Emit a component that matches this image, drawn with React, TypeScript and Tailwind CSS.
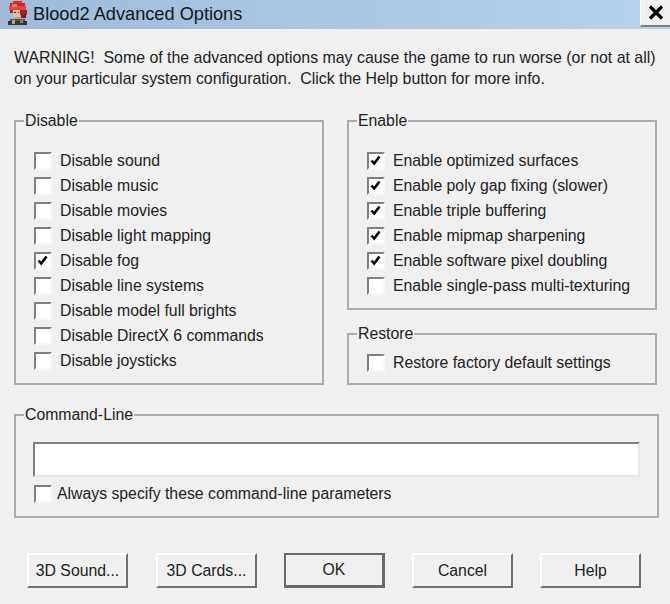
import React from 'react'

const font = "font-['Liberation_Sans',Arial,sans-serif]"

const disableOptions = [
  { label: 'Disable sound', checked: false },
  { label: 'Disable music', checked: false },
  { label: 'Disable movies', checked: false },
  { label: 'Disable light mapping', checked: false },
  { label: 'Disable fog', checked: true },
  { label: 'Disable line systems', checked: false },
  { label: 'Disable model full brights', checked: false },
  { label: 'Disable DirectX 6 commands', checked: false },
  { label: 'Disable joysticks', checked: false }
]

const enableOptions = [
  { label: 'Enable optimized surfaces', checked: true },
  { label: 'Enable poly gap fixing (slower)', checked: true },
  { label: 'Enable triple buffering', checked: true },
  { label: 'Enable mipmap sharpening', checked: true },
  { label: 'Enable software pixel doubling', checked: true },
  { label: 'Enable single-pass multi-texturing', checked: false }
]

const Check: React.FC<{ label: string; checked?: boolean; gap?: string }> = ({
  label,
  checked,
  gap = 'ml-[8px]'
}) => (
  <div className="flex items-center h-[25px]">
    <div className="ml-[1px] w-[18px] h-[18px] bg-white border-2 border-t-[#808080] border-l-[#808080] border-r-[#f8f8f8] border-b-[#f8f8f8] shrink-0">
      {checked && (
        <svg width="14" height="14" viewBox="0 0 14 14">
          <path d="M2.5 6.5 L5.2 9.5 L10.5 2.5" fill="none" stroke="#000" strokeWidth="2.6" />
        </svg>
      )}
    </div>
    <span className={`${gap} whitespace-nowrap`}>{label}</span>
  </div>
)

const Group: React.FC<{ title: string; className: string; children: React.ReactNode }> = ({
  title,
  className,
  children
}) => (
  <fieldset className={`border-2 border-[#acacac] ${className}`}>
    <legend className="-ml-[9px] px-[1px] leading-[18px]">{title}</legend>
    {children}
  </fieldset>
)

const Button: React.FC<{ label: string; isDefault?: boolean; className?: string }> = ({
  label,
  isDefault,
  className = ''
}) => (
  <button
    className={`w-[101px] h-[35px] flex items-center justify-center bg-[#f0f0f0] text-[#222] ${
      isDefault
        ? 'border-2 border-[#696969] border-r-[3px] border-b-[3px]'
        : 'border-2 border-t-white border-l-white border-r-[#6f6f6f] border-b-[#6f6f6f]'
    } ${className}`}
  >
    {label}
  </button>
)

export default function App() {
  return (
    <div className={`w-[670px] h-[604px] overflow-hidden bg-[#f0f0f0] text-[15.8px] text-[#222] ${font}`}>
      <div className="h-[29px] flex items-center bg-gradient-to-r from-[#9fbbd8] to-[#b9d2eb]">
        <svg width="21" height="24" viewBox="0 0 21 24" className="ml-[7px] mb-[4px]" shapeRendering="crispEdges">
          <rect x="6" y="0" width="9" height="2" fill="#d8343a" />
          <rect x="3" y="2" width="15" height="3" fill="#c8242c" />
          <rect x="2" y="5" width="17" height="4" fill="#e04844" />
          <rect x="5" y="3" width="5" height="3" fill="#f07060" />
          <rect x="12" y="9" width="8" height="5" fill="#a81c24" />
          <rect x="3" y="9" width="4" height="3" fill="#b82028" />
          <rect x="14" y="14" width="5" height="3" fill="#7c1820" />
          <rect x="6" y="9" width="7" height="7" fill="#ecbc98" />
          <rect x="7" y="11" width="2" height="1" fill="#402820" />
          <rect x="11" y="11" width="1" height="1" fill="#402820" />
          <rect x="8" y="16" width="5" height="2" fill="#c89478" />
          <rect x="3" y="18" width="15" height="3" fill="#585048" />
          <rect x="1" y="20" width="19" height="4" fill="#383430" />
          <rect x="5" y="19" width="3" height="4" fill="#b0a498" />
          <rect x="13" y="19" width="3" height="3" fill="#8c8074" />
        </svg>
        <span className="ml-[5px] text-[18.2px] text-[#101820] whitespace-nowrap">Blood2 Advanced Options</span>
        <div className="ml-auto self-start w-[30px] h-[27px] flex items-center justify-center bg-[#f0f0f0] border-l border-l-white border-b-2 border-b-[#808080]">
          <svg width="16" height="15" viewBox="0 0 16 15">
            <path d="M2 1.5 L14 13.5 M14 1.5 L2 13.5" stroke="#000" strokeWidth="3.2" />
          </svg>
        </div>
      </div>

      <div className="px-[14px]">
        <p className="mt-[18px] leading-[21px] whitespace-nowrap text-[15.9px]">
          WARNING!&nbsp; Some of the advanced options may cause the game to run worse (or not at all)
          <br />
          on your particular system configuration.&nbsp; Click the Help button for more info.
        </p>

        <div className="mt-[23px] flex justify-between w-[643px]">
          <Group title="Disable" className="w-[310px] h-[273px] pl-[17px] pt-[18px]">
            {disableOptions.map(o => (
              <Check key={o.label} {...o} />
            ))}
          </Group>
          <div className="w-[310px] flex flex-col">
            <Group title="Enable" className="h-[198px] pl-[17px] pt-[18px]">
              {enableOptions.map(o => (
                <Check key={o.label} {...o} />
              ))}
            </Group>
            <Group title="Restore" className="mt-[15px] h-[60px] pl-[17px] pt-[7px]">
              <Check label="Restore factory default settings" />
            </Group>
          </div>
        </div>

        <Group title="Command-Line" className="mt-[21px] w-[643px] h-[112px] pl-[17px] pr-[17px] pt-[18px]">
          <div className="w-[607px] h-[35px] bg-white border-2 border-t-[#808080] border-l-[#808080] border-r-[#e8e8e8] border-b-[#e8e8e8]" />
          <div className="mt-[4px]">
            <Check label="Always specify these command-line parameters" gap="ml-[5px]" />
          </div>
        </Group>

        <div className="mt-[35px] flex pl-[13px]">
          <Button label="3D Sound..." />
          <Button label="3D Cards..." className="ml-[28px]" />
          <Button label="OK" isDefault className="ml-[27px]" />
          <Button label="Cancel" className="ml-[27px]" />
          <Button label="Help" className="ml-[27px]" />
        </div>
      </div>
    </div>
  )
}
